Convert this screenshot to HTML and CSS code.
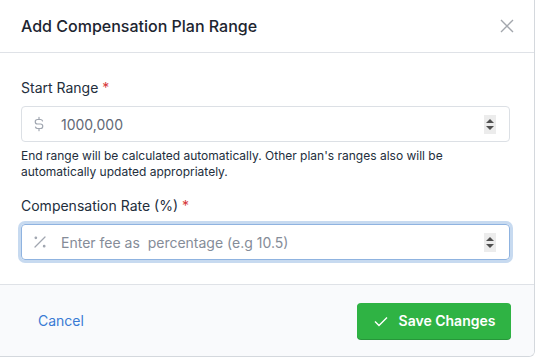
FILE: index.html
```html
<!DOCTYPE html>
<html lang="en">
<head>
    <meta charset="UTF-8">
    <meta name="viewport" content="width=device-width, initial-scale=1.0">
    <title>Add Compensation Plan Range</title>
    <link rel="stylesheet" href="styles.css">
</head>
<body>
    <div class="modal">
        <div class="modal-header">
            <h5 class="modal-title">Add Compensation Plan Range</h5>
            <button class="btn-close" aria-label="Close">
                <svg width="14" height="14" viewBox="0 0 14 14"><path d="M1 1L13 13M13 1L1 13" stroke="#a3a7ad" stroke-width="1.4" fill="none"/></svg>
            </button>
        </div>

        <div class="modal-body">
            <!-- start range -->
            <label class="form-label">Start Range <span class="req">*</span></label>
            <div class="input-box">
                <span class="input-icon">
                    <svg width="18" height="18" viewBox="0 0 24 24" fill="none" stroke="#a0a6b0" stroke-width="1.6" stroke-linecap="round" stroke-linejoin="round"><path d="M16.7 8a3 3 0 0 0 -2.7 -2h-4a3 3 0 0 0 0 6h4a3 3 0 0 1 0 6h-4a3 3 0 0 1 -2.7 -2"/><path d="M12 3v3m0 12v3"/></svg>
                </span>
                <span class="input-value">1000,000</span>
                <span class="spinner"><i class="up"></i><i class="down"></i></span>
            </div>
            <p class="form-hint">End range will be calculated automatically. Other plan's ranges also will be automatically updated appropriately.</p>

            <!-- rate -->
            <label class="form-label second">Compensation Rate (%) <span class="req">*</span></label>
            <div class="input-box focused">
                <span class="input-icon">
                    <svg width="20" height="20" viewBox="0 0 24 24" fill="none" stroke="#a0a6b0" stroke-width="1.5" stroke-linecap="round"><circle cx="17" cy="17" r="0.9"/><circle cx="7" cy="7" r="0.9"/><path d="M6 18L18 6"/></svg>
                </span>
                <span class="input-value placeholder">Enter fee as&nbsp; percentage (e.g 10.5)</span>
                <span class="spinner"><i class="up"></i><i class="down"></i></span>
            </div>
        </div>

        <div class="modal-footer">
            <a class="btn-link">Cancel</a>
            <button class="btn-success">
                <svg width="16" height="16" viewBox="0 0 16 16"><path d="M2 8.5L6 12.5L14 4.5" stroke="#fff" stroke-width="1.4" fill="none"/></svg>
                Save Changes
            </button>
        </div>
    </div>
</body>
</html>
```

FILE: styles.css
```css
body {
    margin: 0;
    padding: 0;
    font-family: Inter, "Noto Sans", sans-serif;
    background: #fff;
    color: #232e3c;
}

.modal {
    width: 534px;
    height: 356px;
    border-right: 1px solid #d4d8dd;
    border-bottom: 1px solid #d4d8dd;
    border-bottom-right-radius: 6px;
    background: #fff;
    display: flex;
    flex-direction: column;
    overflow: hidden;
}

.modal-header {
    height: 52px;
    border-bottom: 1px solid #dfe2e7;
    display: flex;
    align-items: center;
    justify-content: space-between;
    padding: 0 20px 0 21px;
}

.modal-title {
    margin: 0;
    font-size: 16px;
    font-weight: 500;
    color: #1d2530;
}

.btn-close {
    border: 0;
    background: none;
    padding: 0;
    width: 14px;
    height: 14px;
    display: flex;
}

.modal-body {
    padding: 25px 24px 24px 21px;
    display: flex;
    flex-direction: column;
}

.form-label {
    font-size: 14px;
    line-height: 20px;
    color: #232e3c;
    margin-bottom: 8px;
}

.form-label.second {
    margin-top: 16px;
}

.req {
    color: #d63939;
}

.input-box {
    height: 34px;
    border: 1px solid #dce0e5;
    border-radius: 4px;
    display: flex;
    align-items: center;
    padding: 0 13px 0 8px;
    font-size: 14px;
}

.input-box.focused {
    border-color: #8fb3e0;
    box-shadow: 0 0 0 3px rgba(32, 107, 196, 0.25);
}

.input-icon {
    width: 31px;
    display: flex;
    align-items: center;
}

.input-value {
    flex: 1;
    color: #626976;
}

.input-value.placeholder {
    color: #858c98;
}

.spinner {
    width: 12px;
    height: 19px;
    background: #ececec;
    display: flex;
    flex-direction: column;
    align-items: center;
    justify-content: center;
    gap: 3px;
}

.spinner i {
    width: 0;
    height: 0;
    border-left: 4px solid transparent;
    border-right: 4px solid transparent;
}

.spinner .up {
    border-bottom: 4px solid #505050;
}

.spinner .down {
    border-top: 4px solid #505050;
}

.form-hint {
    margin: 6px 0 0;
    font-size: 12px;
    line-height: 16px;
    color: #232e3c;
}

.modal-footer {
    flex: 1;
    border-top: 1px solid #dfe2e7;
    background: #f9fafc;
    display: flex;
    align-items: center;
    justify-content: space-between;
    padding: 0 23px 0 38px;
}

.btn-link {
    color: #3a7ad4;
    font-size: 14px;
}

.btn-success {
    width: 154px;
    height: 36px;
    border: 0;
    border-radius: 4px;
    background: #2fb344;
    box-shadow: 0 1px 0 #27963a;
    color: #fff;
    font-family: Inter, sans-serif;
    font-size: 14px;
    font-weight: 600;
    display: flex;
    align-items: center;
    justify-content: center;
    gap: 10px;
}
```
